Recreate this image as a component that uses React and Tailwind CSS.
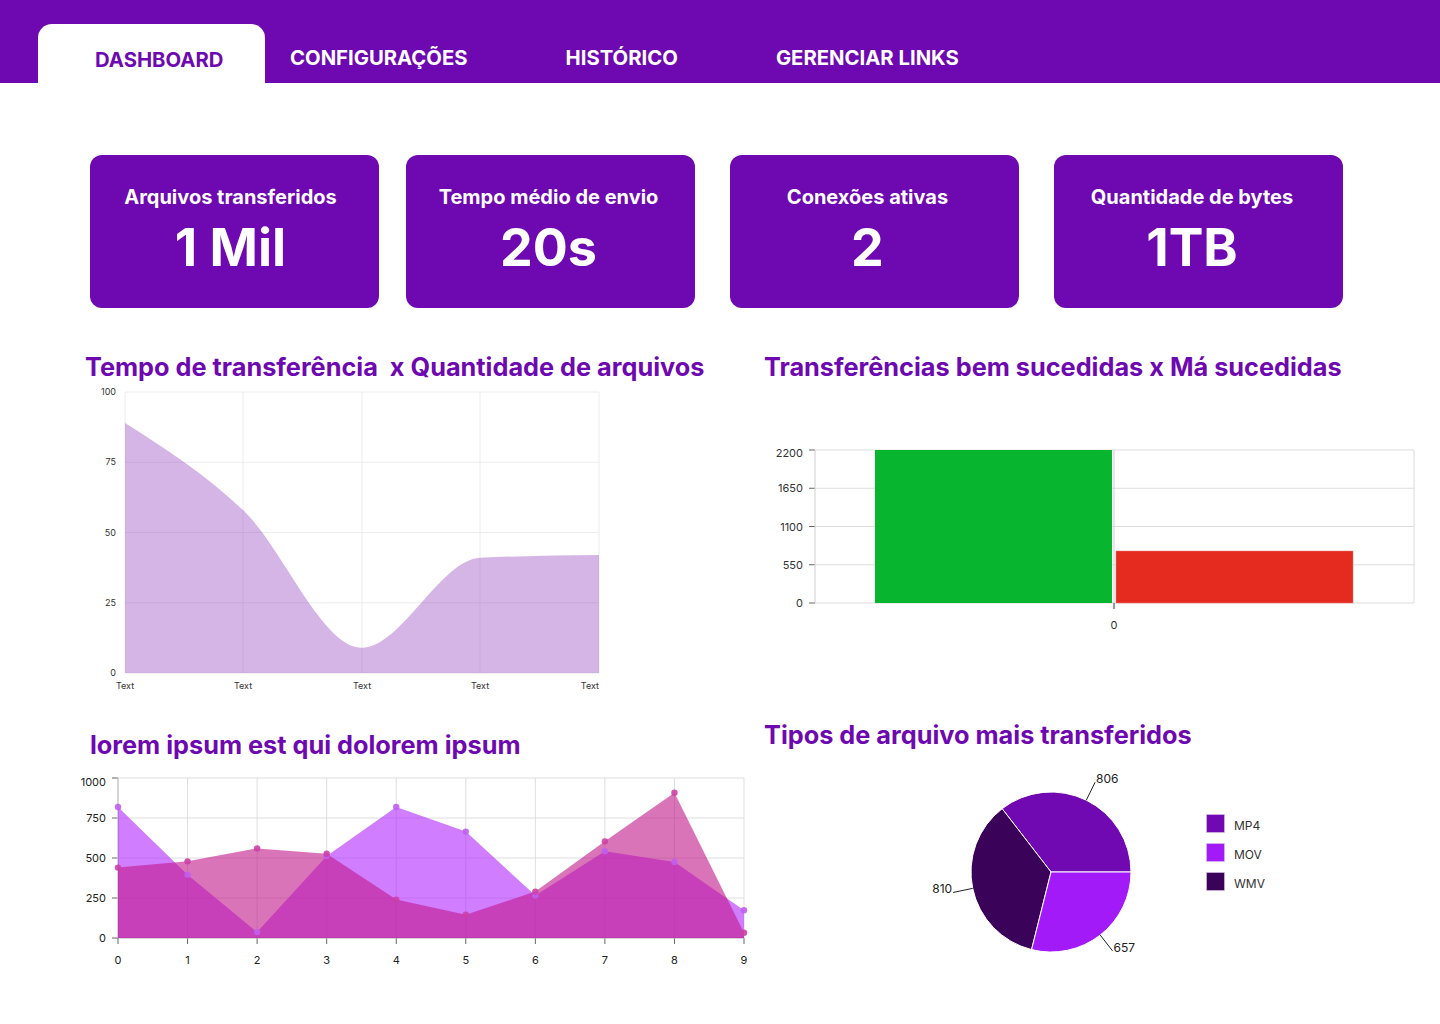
const PURPLE = "#6e08b0";

const tabs = ["CONFIGURAÇÕES", "HISTÓRICO", "GERENCIAR LINKS"];

const cards = [
  { title: "Arquivos transferidos", value: "1 Mil", ml: "ml-[90px]", pr: "pr-[8px]" },
  { title: "Tempo médio de envio", value: "20s", ml: "ml-[27px]", pr: "pr-[4px]" },
  { title: "Conexões ativas", value: "2", ml: "ml-[35px]", pr: "pr-[14px]" },
  { title: "Quantidade de bytes", value: "1TB", ml: "ml-[35px]", pr: "pr-[13px]" },
];

// d3-style monotoneX curve
const sign = (x) => (x < 0 ? -1 : 1);
function slope3(a, b, c) {
  const h0 = b[0] - a[0];
  const h1 = c[0] - b[0];
  const s0 = (b[1] - a[1]) / h0;
  const s1 = (c[1] - b[1]) / h1;
  const p = (s0 * h1 + s1 * h0) / (h0 + h1);
  return (sign(s0) + sign(s1)) * Math.min(Math.abs(s0), Math.abs(s1), 0.5 * Math.abs(p)) || 0;
}
function slope2(a, b, t) {
  const h = b[0] - a[0];
  return h ? (3 * (b[1] - a[1]) / h - t) / 2 : t;
}
function monotone(pts) {
  const n = pts.length;
  const t = [];
  for (let i = 1; i < n - 1; i++) t[i] = slope3(pts[i - 1], pts[i], pts[i + 1]);
  t[0] = slope2(pts[0], pts[1], t[1]);
  t[n - 1] = slope2(pts[n - 2], pts[n - 1], t[n - 2]);
  let d = `M${pts[0][0]},${pts[0][1]}`;
  for (let i = 0; i < n - 1; i++) {
    const [x0, y0] = pts[i];
    const [x1, y1] = pts[i + 1];
    const dx = (x1 - x0) / 3;
    d += `C${x0 + dx},${y0 + dx * t[i]},${x1 - dx},${y1 - dx * t[i + 1]},${x1},${y1}`;
  }
  return d;
}

function TimeChart() {
  const xs = [35, 153, 272, 390, 509];
  const vals = [89, 58, 9, 41, 42];
  const y = (v) => 288 - v * 2.81;
  const pts = vals.map((v, i) => [xs[i], y(v)]);
  const area = monotone(pts) + `L509,288L35,288Z`;
  return (
    <svg width="520" height="310" className="ml-[90px] block">
      {[0, 25, 50, 75, 100].map((v) => (
        <g key={v}>
          <line x1="35" x2="509" y1={y(v)} y2={y(v)} stroke="#ececec" />
          <text x="26" y={y(v)} dy="3" textAnchor="end" fontSize="9" fill="#333">{v}</text>
        </g>
      ))}
      {xs.map((x, i) => (
        <g key={x}>
          <line x1={x} x2={x} y1="7" y2="288" stroke="#ececec" />
          <text x={i === 4 ? 509 : x} y="304" textAnchor={i === 4 ? "end" : "middle"} fontSize="9" fill="#333">Text</text>
        </g>
      ))}
      <path d={area} fill="#9446c1" opacity="0.4" />
    </svg>
  );
}

function BarsChart() {
  const ys = [10, 48.25, 86.5, 124.75, 163];
  const labels = ["2200", "1650", "1100", "550", "0"];
  return (
    <svg width="660" height="200" className="block">
      {ys.map((yy, i) => (
        <g key={i}>
          <line x1="51" x2="650" y1={yy} y2={yy} stroke="#dcdcdc" />
          <line x1="45" x2="51" y1={yy} y2={yy} stroke="#666" />
          <text x="39" y={i === 0 ? 13 : yy} dy="4" textAnchor="end" fontSize="11" fill="#333">{labels[i]}</text>
        </g>
      ))}
      <line x1="650" x2="650" y1="10" y2="163" stroke="#dcdcdc" />
      <line x1="350" x2="350" y1="10" y2="163" stroke="#cfcfcf" />
      <line x1="51" x2="51" y1="10" y2="163" stroke="#cfcfcf" />
      <rect x="111" y="10" width="237" height="153" fill="#07b52f" />
      <rect x="352" y="111" width="237" height="52" fill="#e52b20" stroke="#ee7770" strokeWidth="0.5" />
      <line x1="350" x2="350" y1="163" y2="169" stroke="#333" />
      <text x="350" y="189" textAnchor="middle" fontSize="11" fill="#333">0</text>
    </svg>
  );
}

function AreasChart() {
  const violet = [819, 396, 37, 512, 819, 665, 265, 542, 475, 173];
  const pink = [440, 479, 560, 527, 240, 145, 290, 604, 908, 33];
  const x = (i) => 48 + i * (626 / 9);
  const y = (v) => 168 - v * 0.16;
  const poly = (d) =>
    d.map((v, i) => `${i ? "L" : "M"}${x(i)},${y(v)}`).join("") + `L${x(9)},168L${x(0)},168Z`;
  const ticks = [1000, 750, 500, 250, 0];
  return (
    <svg width="690" height="205" className="ml-[70px] block">
      {ticks.map((v) => (
        <g key={v}>
          <line x1="48" x2="674" y1={y(v)} y2={y(v)} stroke="#dedede" />
          <line x1="42" x2="48" y1={y(v)} y2={y(v)} stroke="#666" />
          <text x="36" y={v === 1000 ? 12 : y(v)} dy="4" textAnchor="end" fontSize="11" fill="#222">{v}</text>
        </g>
      ))}
      {violet.map((_, i) => (
        <g key={i}>
          <line x1={x(i)} x2={x(i)} y1="8" y2="168" stroke="#dedede" />
          <line x1={x(i)} x2={x(i)} y1="168" y2="174" stroke="#666" />
          <text x={x(i)} y="194" textAnchor="middle" fontSize="11" fill="#222">{i}</text>
        </g>
      ))}
      <line x1="48" x2="48" y1="8" y2="168" stroke="#bbb" />
      <line x1="48" x2="674" y1="168" y2="168" stroke="#bbb" />
      <path d={poly(violet)} fill="#b026ff" opacity="0.6" />
      <path d={poly(pink)} fill="#c2188b" opacity="0.6" />
      {violet.map((v, i) => (
        <circle key={"v" + i} cx={x(i)} cy={y(v)} r="3.2" fill="#c05ef0" opacity="0.9" />
      ))}
      {pink.map((v, i) => (
        <circle key={"p" + i} cx={x(i)} cy={y(v)} r="3.2" fill="#cc3fa6" opacity="0.9" />
      ))}
    </svg>
  );
}

function PieChart() {
  const cx = 151;
  const cy = 112;
  const r = 80;
  const slices = [
    { v: 806, c: "#7009b2" },
    { v: 810, c: "#3a0258" },
    { v: 657, c: "#a21af7" },
  ];
  const total = slices.reduce((s, d) => s + d.v, 0);
  const pt = (a, rr) => [cx + rr * Math.cos((a * Math.PI) / 180), cy - rr * Math.sin((a * Math.PI) / 180)];
  let start = 0;
  const parts = slices.map((d) => {
    const sweep = (d.v / total) * 360;
    const end = start + sweep;
    const [x0, y0] = pt(start, r);
    const [x1, y1] = pt(end, r);
    const mid = start + sweep / 2;
    const [lx0, ly0] = pt(mid, r);
    const [lx1, ly1] = pt(mid, r + 20);
    const right = Math.cos((mid * Math.PI) / 180) >= 0;
    const out = {
      ...d,
      path: `M${cx},${cy}L${x0},${y0}A${r},${r} 0 ${sweep > 180 ? 1 : 0} 0 ${x1},${y1}Z`,
      line: [lx0, ly0, lx1, ly1],
      right,
    };
    start = end;
    return out;
  });
  const legend = [
    { l: "MP4", c: "#7009b2" },
    { l: "MOV", c: "#a21af7" },
    { l: "WMV", c: "#3a0258" },
  ];
  return (
    <svg width="400" height="210" className="ml-[136px] block">
      {parts.map((p) => (
        <path key={p.v} d={p.path} fill={p.c} stroke="#fff" strokeWidth="1" />
      ))}
      {parts.map((p) => (
        <g key={"l" + p.v}>
          <line x1={p.line[0]} y1={p.line[1]} x2={p.line[2]} y2={p.line[3]} stroke="#222" />
          <text
            x={p.line[2] + (p.right ? 1 : -1)}
            y={p.line[3] - 3}
            dy="4"
            textAnchor={p.right ? "start" : "end"}
            fontSize="12"
            fill="#222"
          >
            {p.v}
          </text>
        </g>
      ))}
      {legend.map((d, i) => (
        <g key={d.l}>
          <rect x="306.5" y={54.5 + i * 29} width="18" height="18" fill={d.c} stroke="#d9c4ea" strokeWidth="0.6" />
          <text x="334" y={70 + i * 29} fontSize="12" fill="#333">{d.l}</text>
        </g>
      ))}
    </svg>
  );
}

function Heading({ children, className = "" }) {
  return (
    <h2 className={`text-[25.3px] leading-[32px] h-[32px] font-bold text-[#6e08b0] whitespace-pre ${className}`}>
      {children}
    </h2>
  );
}

export default function App() {
  return (
    <div className="w-[1440px] h-[1024px] bg-white font-['Inter',sans-serif] overflow-hidden">
      <header className="h-[83px] bg-[#6e08b0] flex items-start">
        <div className="ml-[38px] mt-[24px] w-[227px] h-[59px] bg-white rounded-t-[14px] pl-[57px] pt-[24px]">
          <span className="text-[20.3px] leading-[24px] font-bold text-[#6e08b0] block">DASHBOARD</span>
        </div>
        <nav className="ml-[25px] mt-[46px] flex gap-[98px]">
          {tabs.map((t) => (
            <span key={t} className="text-[20.3px] leading-[24px] font-bold text-white">{t}</span>
          ))}
        </nav>
      </header>

      <section className="mt-[72px] flex">
        {cards.map((c) => (
          <div
            key={c.title}
            className={`${c.ml} ${c.pr} w-[289px] h-[153px] rounded-[12px] bg-[#6e08b0] text-white flex flex-col items-center pt-[28px]`}
          >
            <p className="text-[20px] leading-[28px] font-bold">{c.title}</p>
            <p className="mt-[9px] text-[52px] leading-[56px] font-bold">{c.value}</p>
          </div>
        ))}
      </section>

      <main className="mt-[43px] flex">
        <div className="w-[679px] flex flex-col">
          <Heading className="ml-[85px]">{"Tempo de transferência  x Quantidade de arquivos"}</Heading>
          <div className="mt-[2px]">
            <TimeChart />
          </div>
          <Heading className="ml-[90px] mt-[34px]">lorem ipsum est qui dolorem ipsum</Heading>
          <div className="mt-[9px]">
            <AreasChart />
          </div>
        </div>
        <div className="flex flex-col ml-[85px]">
          <Heading>Transferências bem sucedidas x Má sucedidas</Heading>
          <div className="mt-[57px]">
            <BarsChart />
          </div>
          <Heading className="mt-[79px]">Tipos de arquivo mais transferidos</Heading>
          <div className="mt-[9px]">
            <PieChart />
          </div>
        </div>
      </main>
    </div>
  );
}
